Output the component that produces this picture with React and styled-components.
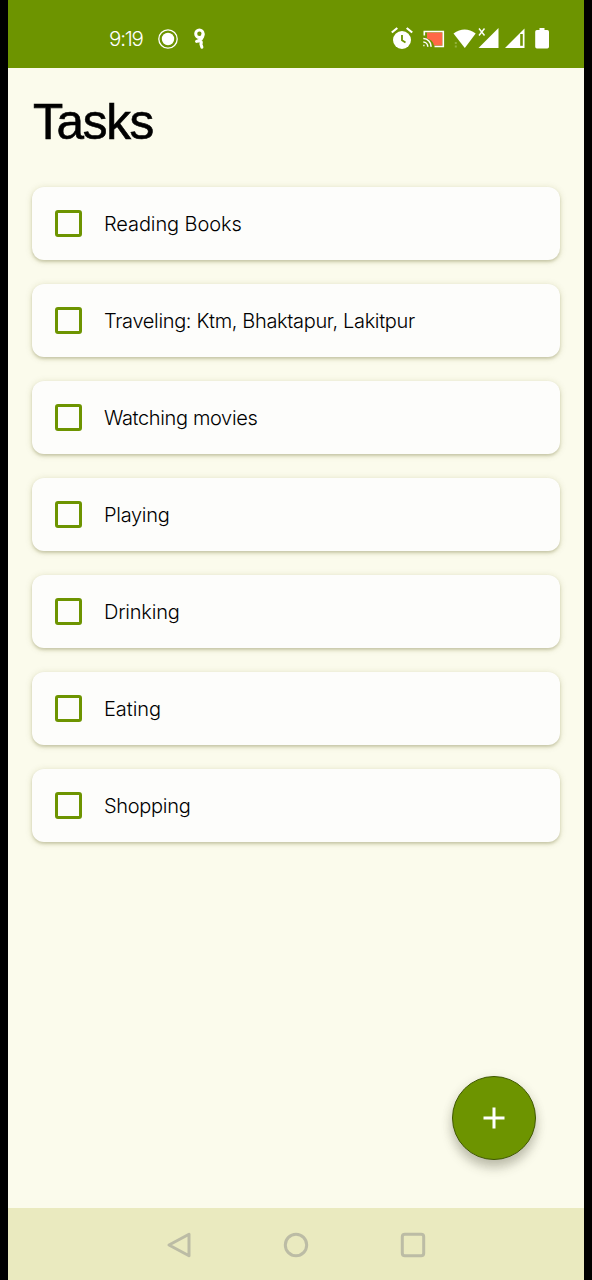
import React from "react";
import styled, { createGlobalStyle } from "styled-components";

const Global = createGlobalStyle`
  *{box-sizing:border-box}
  body{margin:0;background:#000;font-family:Inter,"Liberation Sans",sans-serif;color:#000}
`;
const Screen = styled.div`
  position:relative;width:576px;height:1280px;margin:0 auto;
  display:flex;flex-direction:column;background:#fbfbec;
`;
const StatusBar = styled.header`
  height:68px;flex:none;background:#6d9400;color:#fff;
  display:flex;align-items:center;justify-content:space-between;
  padding:10px 34px 0 101px;
`;
const Group = styled.div`
  display:flex;align-items:center;gap:${p => p.$gap}px;
  svg{display:block;flex:none}
`;
const Clock = styled.span`
  font:300 20.5px/24px Inter,"Liberation Sans",sans-serif;letter-spacing:-1.2px;width:37px;white-space:nowrap;
`;
const Main = styled.main`flex:1;padding:23px 24px 0;`;
const Title = styled.h1`
  margin:0 0 34px;height:62px;padding-left:1px;
  font:400 49.5px/62px "Liberation Sans",sans-serif;letter-spacing:-1.3px;
  -webkit-text-stroke:.6px #000;
`;
const List = styled.ul`
  list-style:none;margin:0;padding:0;display:flex;flex-direction:column;gap:24px;
`;
const Card = styled.li`
  height:73px;border-radius:12px;background:#fdfdfb;
  box-shadow:0 2px 3px rgba(80,80,20,.22),0 1px 7px rgba(100,100,10,.18);
  display:flex;align-items:center;gap:22px;padding-left:23px;
`;
const Box = styled.span`
  width:27px;height:27px;border:3px solid #6d9400;border-radius:3px;flex:none;
`;
const Label = styled.span`
  font-weight:300;font-size:20px;line-height:28px;letter-spacing:${p => p.$track}px;white-space:nowrap;
`;
const Fab = styled.button`
  position:absolute;right:48px;top:1076px;width:84px;height:84px;padding:0;
  border:1px solid #3f5800;border-radius:50%;background:#6d9400;
  box-shadow:0 8px 11px rgba(60,60,40,.28),0 2px 12px rgba(60,60,40,.1);
  display:flex;align-items:center;justify-content:center;
`;
const NavBar = styled.footer`
  height:72px;flex:none;background:#eaeabf;
  display:flex;align-items:center;justify-content:center;gap:91px;padding-top:1px;
`;

const tasks = [
  ["Reading Books", -0.1], ["Traveling: Ktm, Bhaktapur, Lakitpur", -0.34], ["Watching movies", -0.36],
  ["Playing", -0.3], ["Drinking", -0.22], ["Eating", -0.05], ["Shopping", -0.3],
];

export default function App() {
  return (
    <>
      <Global />
      <Screen>
        <StatusBar>
          <Group $gap={12}>
            <Clock>9:19</Clock>
            <svg width="20" height="20" viewBox="0 0 20 20">
              <circle cx="10" cy="10" r="9.2" fill="none" stroke="#fff" strokeWidth="1.3" />
              <circle cx="10" cy="10" r="6.2" fill="#fff" />
            </svg>
            <svg width="18" height="22" viewBox="0 0 18 22" fill="none" stroke="#fff" strokeWidth="3" strokeLinecap="round" strokeLinejoin="round">
              <circle cx="9.4" cy="5.7" r="3.7" />
              <path d="M13.1 6.2c0 4-2 5.9-6.6 7.2M6.5 13.4c4-1.2 5.6.1 4.4 2.6l1 3.3" />
            </svg>
          </Group>
          <svg width="160" height="26" viewBox="390 26 160 26" fill="#fff">
            <circle cx="402" cy="40" r="9" />
            <path d="M391.8 32.5l5.5-4.5M412.2 32.5l-5.5-4.5" stroke="#fff" strokeWidth="2.2" />
            <path d="M402 35v5.2l3.5 2.2" fill="none" stroke="#6d9400" strokeWidth="1.8" />
            <path d="M427 32.4h15.5v13H434a9 9 0 0 0-7-7z" fill="#ff6847" />
            <path d="M424.3 35.5v-4h19v15h-8.8M423.3 45.5h1.2M423.3 42a4.7 4.7 0 0 1 4.5 4.7M423.3 38.5a8 8 0 0 1 7.8 8.2" fill="none" stroke="#fff" strokeWidth="1.6" />
            <path d="M453.5 33.5q11.2-8 22.2 0L464.8 48z" />
            <path d="M455.8 42v2M455.8 45.5v2" stroke="#91b23c" strokeWidth="2" />
            <path d="M479 28.5l5.5 7M484.5 28.5l-5.5 7" stroke="#fff" strokeWidth="1.4" />
            <path d="M498.5 28v20H478.5z" />
            <path d="M524.5 28.5V48H505z" />
            <path d="M521.5 34v11.8" stroke="#6d9400" strokeWidth="2.6" />
            <path d="M539.5 28h5v2h2.8q1.7 0 1.7 1.7v15q0 1.8-1.7 1.8h-10.4q-1.7 0-1.7-1.8v-15q0-1.7 1.7-1.7h2.6z" />
          </svg>
        </StatusBar>
        <Main>
          <Title>Tasks</Title>
          <List>
            {tasks.map(([name, track]) => (
              <Card key={name}>
                <Box />
                <Label $track={track}>{name}</Label>
              </Card>
            ))}
          </List>
        </Main>
        <Fab aria-label="Add task">
          <svg width="22" height="22" viewBox="0 0 22 22" stroke="#fff" strokeWidth="3">
            <path d="M11 .5v21M.5 11h21" />
          </svg>
        </Fab>
        <NavBar>
          <svg width="26" height="26" viewBox="0 0 26 26" fill="none" stroke="#bcbca5" strokeWidth="3" strokeLinejoin="round">
            <path d="M23 2.3v21.4L3 13z" />
          </svg>
          <svg width="26" height="26" viewBox="0 0 26 26" fill="none" stroke="#bcbca5" strokeWidth="3">
            <circle cx="13" cy="13" r="10.7" />
          </svg>
          <svg width="26" height="26" viewBox="0 0 26 26" fill="none" stroke="#bcbca5" strokeWidth="3">
            <rect x="2.3" y="2.3" width="21.4" height="21.4" rx="2.5" />
          </svg>
        </NavBar>
      </Screen>
    </>
  );
}
